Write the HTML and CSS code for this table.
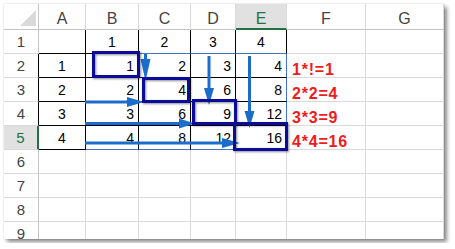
FILE: index.html
```html
<!DOCTYPE html>
<html>
<head>
<meta charset="utf-8">
<link rel="stylesheet" href="styles.css">
</head>
<body>
<div class="sheet">
  <div class="cell corner"><svg class="tri" width="16" height="16" viewBox="0 0 16 16"><polygon points="16,0 16,16 0,16" fill="#d9d9d9"/></svg></div>
  <div class="cell ch">A</div>
  <div class="cell ch">B</div>
  <div class="cell ch">C</div>
  <div class="cell ch">D</div>
  <div class="cell ch sel">E</div>
  <div class="cell ch">F</div>
  <div class="cell ch">G</div>

  <div class="cell rh">1</div>
  <div class="cell tr tb"></div>
  <div class="cell m tr tb">1</div>
  <div class="cell m tr bb">2</div>
  <div class="cell m tr bb">3</div>
  <div class="cell m tr bb">4</div>
  <div class="cell"></div>
  <div class="cell"></div>

  <div class="cell rh trb">2</div>
  <div class="cell m tr tb">1</div>
  <div class="cell r tr tb">1</div>
  <div class="cell r tr tb">2</div>
  <div class="cell r tr tb">3</div>
  <div class="cell r br tb">4</div>
  <div class="cell lbl">1*!=1</div>
  <div class="cell"></div>

  <div class="cell rh trb">3</div>
  <div class="cell m tr tb">2</div>
  <div class="cell r tr tb">2</div>
  <div class="cell r tr tb">4</div>
  <div class="cell r tr tb">6</div>
  <div class="cell r br tb">8</div>
  <div class="cell lbl">2*2=4</div>
  <div class="cell"></div>

  <div class="cell rh trb">4</div>
  <div class="cell m tr tb">3</div>
  <div class="cell r tr tb">3</div>
  <div class="cell r tr tb">6</div>
  <div class="cell r tr tb">9</div>
  <div class="cell r br tb">12</div>
  <div class="cell lbl">3*3=9</div>
  <div class="cell"></div>

  <div class="cell rh rsel">5</div>
  <div class="cell m tr tb">4</div>
  <div class="cell r tr bb">4</div>
  <div class="cell r tr bb">8</div>
  <div class="cell r tr bb">12</div>
  <div class="cell r br bb">16</div>
  <div class="cell lbl">4*4=16</div>
  <div class="cell"></div>

  <div class="cell rh">6</div>
  <div class="cell"></div><div class="cell"></div><div class="cell"></div><div class="cell"></div><div class="cell"></div><div class="cell"></div><div class="cell"></div>
  <div class="cell rh">7</div>
  <div class="cell"></div><div class="cell"></div><div class="cell"></div><div class="cell"></div><div class="cell"></div><div class="cell"></div><div class="cell"></div>
  <div class="cell rh">8</div>
  <div class="cell"></div><div class="cell"></div><div class="cell"></div><div class="cell"></div><div class="cell"></div><div class="cell"></div><div class="cell"></div>
  <div class="cell rh">9</div>
  <div class="cell"></div><div class="cell"></div><div class="cell"></div><div class="cell"></div><div class="cell"></div><div class="cell"></div><div class="cell"></div>

  <svg class="overlay" width="440" height="235" viewBox="4 4 440 235">
    <g class="arrows" fill="#1c6ccc" stroke="#1c6ccc">
      <line x1="145.5" y1="54" x2="145.5" y2="62" stroke-width="3"/>
      <polygon points="140.5,59 150.5,59 145.5,81" stroke="none"/>
      <line x1="209" y1="56" x2="209" y2="90" stroke-width="3"/>
      <polygon points="204,88 214,88 209,105" stroke="none"/>
      <line x1="249.5" y1="56" x2="249.5" y2="113" stroke-width="3"/>
      <polygon points="244.5,111 254.5,111 249.5,128" stroke="none"/>
      <line x1="85" y1="102" x2="130" y2="102" stroke-width="3"/>
      <polygon points="127,97 127,107 144,102" stroke="none"/>
      <line x1="85" y1="123.5" x2="182" y2="123.5" stroke-width="3"/>
      <polygon points="179,118.5 179,128.5 195,123.5" stroke="none"/>
      <line x1="85" y1="143" x2="225" y2="143" stroke-width="3"/>
      <polygon points="222,138 222,148 240,143" stroke="none"/>
    </g>
    <g class="boxes" fill="none" stroke="#0c0c9a" stroke-width="3">
      <rect x="93.5" y="52.5" width="45" height="24"/>
      <rect x="143.5" y="78.5" width="45" height="23"/>
      <rect x="193.5" y="100.5" width="42" height="23"/>
      <rect x="234.5" y="123.5" width="52" height="26"/>
    </g>
  </svg>
</div>
</body>
</html>
```
FILE: styles.css
```css
html, body {
  margin: 0;
  padding: 0;
  background: #ffffff;
}

.sheet {
  position: relative;
  margin: 4px;
  width: 440px;
  height: 235px;
  overflow: hidden;
  display: grid;
  grid-template-columns: 35px 47px 53px 52px 45px 51px 79px 78px;
  grid-template-rows: 26px repeat(9, 24px);
  background: #ffffff;
  box-shadow: 3px 3px 4px rgba(0, 0, 0, 0.45), 0 0 1px rgba(0, 0, 0, 0.3);
  font-family: "Liberation Sans", Arial, sans-serif;
}

.cell {
  box-sizing: border-box;
  display: flex;
  align-items: flex-end;
  padding: 0 4px 4px 4px;
  border-right: 1px solid #dadada;
  border-bottom: 1px solid #dadada;
  font-size: 14px;
  line-height: 14px;
  color: #000000;
  white-space: nowrap;
}

.corner {
  padding: 0;
  position: relative;
  border-bottom-color: #c4c4c4;
  border-right-color: #c4c4c4;
}

.tri {
  position: absolute;
  left: 16px;
  top: 6px;
}

.ch {
  justify-content: center;
  font-size: 16px;
  line-height: 16px;
  padding-bottom: 2px;
  color: #444444;
  border-bottom-color: #c4c4c4;
}

.ch.sel {
  background: #e1e1e1;
  color: #217346;
  border-bottom: 2px solid #217346;
  padding-bottom: 1px;
}

.rh {
  justify-content: center;
  font-size: 15px;
  line-height: 15px;
  color: #444444;
  border-right-color: #c4c4c4;
}

.rh.trb {
  border-right-color: #000000;
}

.rh.rsel {
  background: #e1e1e1;
  color: #217346;
  border-right: 2px solid #217346;
}

.m {
  justify-content: center;
}

.r {
  justify-content: flex-end;
}

.tr {
  border-right-color: #000000;
}

.tb {
  border-bottom-color: #000000;
}

.br {
  border-right-color: #4472c4;
}

.bb {
  border-bottom-color: #4472c4;
}

.lbl {
  padding: 0 0 1px 5px;
  font-size: 16px;
  line-height: 12px;
  font-weight: bold;
  letter-spacing: 0.8px;
  color: #ee1c1c;
  overflow: visible;
}

.overlay {
  position: absolute;
  left: 0;
  top: 0;
  pointer-events: none;
}

.boxes rect {
  filter: drop-shadow(1px 1px 1px rgba(0, 0, 0, 0.45));
}
```
